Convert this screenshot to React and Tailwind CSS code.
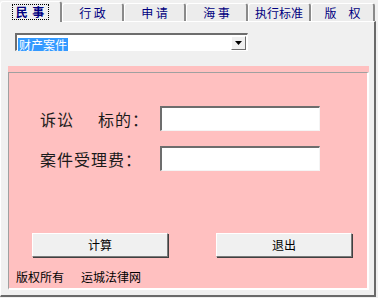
import React from 'react';

const tabs = [
  { label: '民 事', w: 62 },
  { label: '行 政', w: 62 },
  { label: '申 请', w: 62 },
  { label: '海 事', w: 62 },
  { label: '执行标准', w: 63 },
  { label: '版　权', w: 64 },
];

function Field() {
  return (
    <div className="w-[160px] h-[25px] bg-white border-t-2 border-l-2 border-t-[#6d6d6d] border-l-[#6d6d6d] border-b border-r border-b-[#f4f4f4] border-r-[#f4f4f4]" />
  );
}

function Button({ children }) {
  return (
    <button className="w-[136px] h-[24px] bg-[#f0f0f0] text-[12px] text-black border border-t-white border-l-white border-b-[#7a7a7a] border-r-[#7a7a7a] shadow-[1px_1px_0_#404040] flex items-center justify-center">
      {children}
    </button>
  );
}

export default function App() {
  return (
    <div
      className="w-[378px] h-[298px] bg-[#f0f0f0] overflow-hidden text-black"
      style={{ fontFamily: '"Noto Sans CJK SC", "Liberation Sans", sans-serif' }}
    >
      {/* Tab strip */}
      <div className="flex items-end h-[21px]">
        {tabs.map((t, i) => {
          const active = i === 0;
          return (
            <div
              key={t.label}
              style={{ width: t.w }}
              className={`shrink-0 flex items-center justify-center rounded-t-[3px] border-t border-l border-t-white border-l-white border-r-2 border-r-[#8a8a8a] text-[12px] leading-none text-[#000080] ${active ? 'h-[21px] relative z-10 -mb-px bg-[#f0f0f0] font-bold' : 'h-[18px] bg-[#ececec]'}`}
            >
              {active ? (
                <span className="px-[3px] py-[1px] whitespace-pre tracking-[1px] outline-1 outline-dotted outline-black">{t.label}</span>
              ) : (
                <span className="whitespace-pre">{t.label}</span>
              )}
            </div>
          );
        })}
      </div>

      {/* Tab page */}
      <div className="h-[276px] w-[376px] border-t border-l border-t-white border-l-white border-r-2 border-b-2 border-r-[#6a6a6a] border-b-[#6a6a6a] pt-[11px]">
        {/* Combo box */}
        <div className="ml-[14px] w-[233px] h-[18px] bg-white flex items-center border-t-2 border-l-2 border-t-[#6d6d6d] border-l-[#6d6d6d] border-b border-r border-b-white border-r-white">
          <div className="flex-1 pl-[1px]">
            <span className="bg-[#3399ff] text-white text-[12px] leading-[13px] px-[1px] inline-block">财产案件</span>
          </div>
          <div className="w-[15px] h-[14px] mr-[1px] bg-[#f0f0f0] border border-t-white border-l-white border-b-[#6d6d6d] border-r-[#6d6d6d] flex items-center justify-center">
            <svg width="7" height="4" viewBox="0 0 7 4"><path d="M0 0h7L3.5 4z" fill="#000" /></svg>
          </div>
        </div>

        {/* Pink panel */}
        <div className="mt-[15px] ml-[7px] w-[361px] h-[224px] bg-[#ffc0c0] pt-[6px]">
          <div className="h-[218px] border-t border-l border-t-[#a0a0a0] border-l-[#a0a0a0] border-b-2 border-r-2 border-b-white border-r-white">
            <div className="pl-[31px] pt-[33px]">
              <div className="flex items-center h-[25px]">
                <div className="w-[120px] text-[16px] leading-none tracking-[1px] text-[#1a1a1a] flex">
                  <span>诉讼</span>
                  <span className="w-[24px]" />
                  <span>标的：</span>
                </div>
                <Field />
              </div>
              <div className="flex items-center h-[25px] mt-[15px]">
                <div className="w-[120px] text-[16px] leading-none tracking-[1px] text-[#1a1a1a]">案件受理费：</div>
                <Field />
              </div>
            </div>

            <div className="flex pl-[23px] mt-[62px] gap-[48px]">
              <Button>计算</Button>
              <Button>退出</Button>
            </div>

            <div className="flex pl-[7px] mt-[13px] text-[12px] leading-[14px]">
              <span>版权所有</span>
              <span className="ml-[17px]">运城法律网</span>
            </div>
          </div>
        </div>
      </div>
    </div>
  );
}
